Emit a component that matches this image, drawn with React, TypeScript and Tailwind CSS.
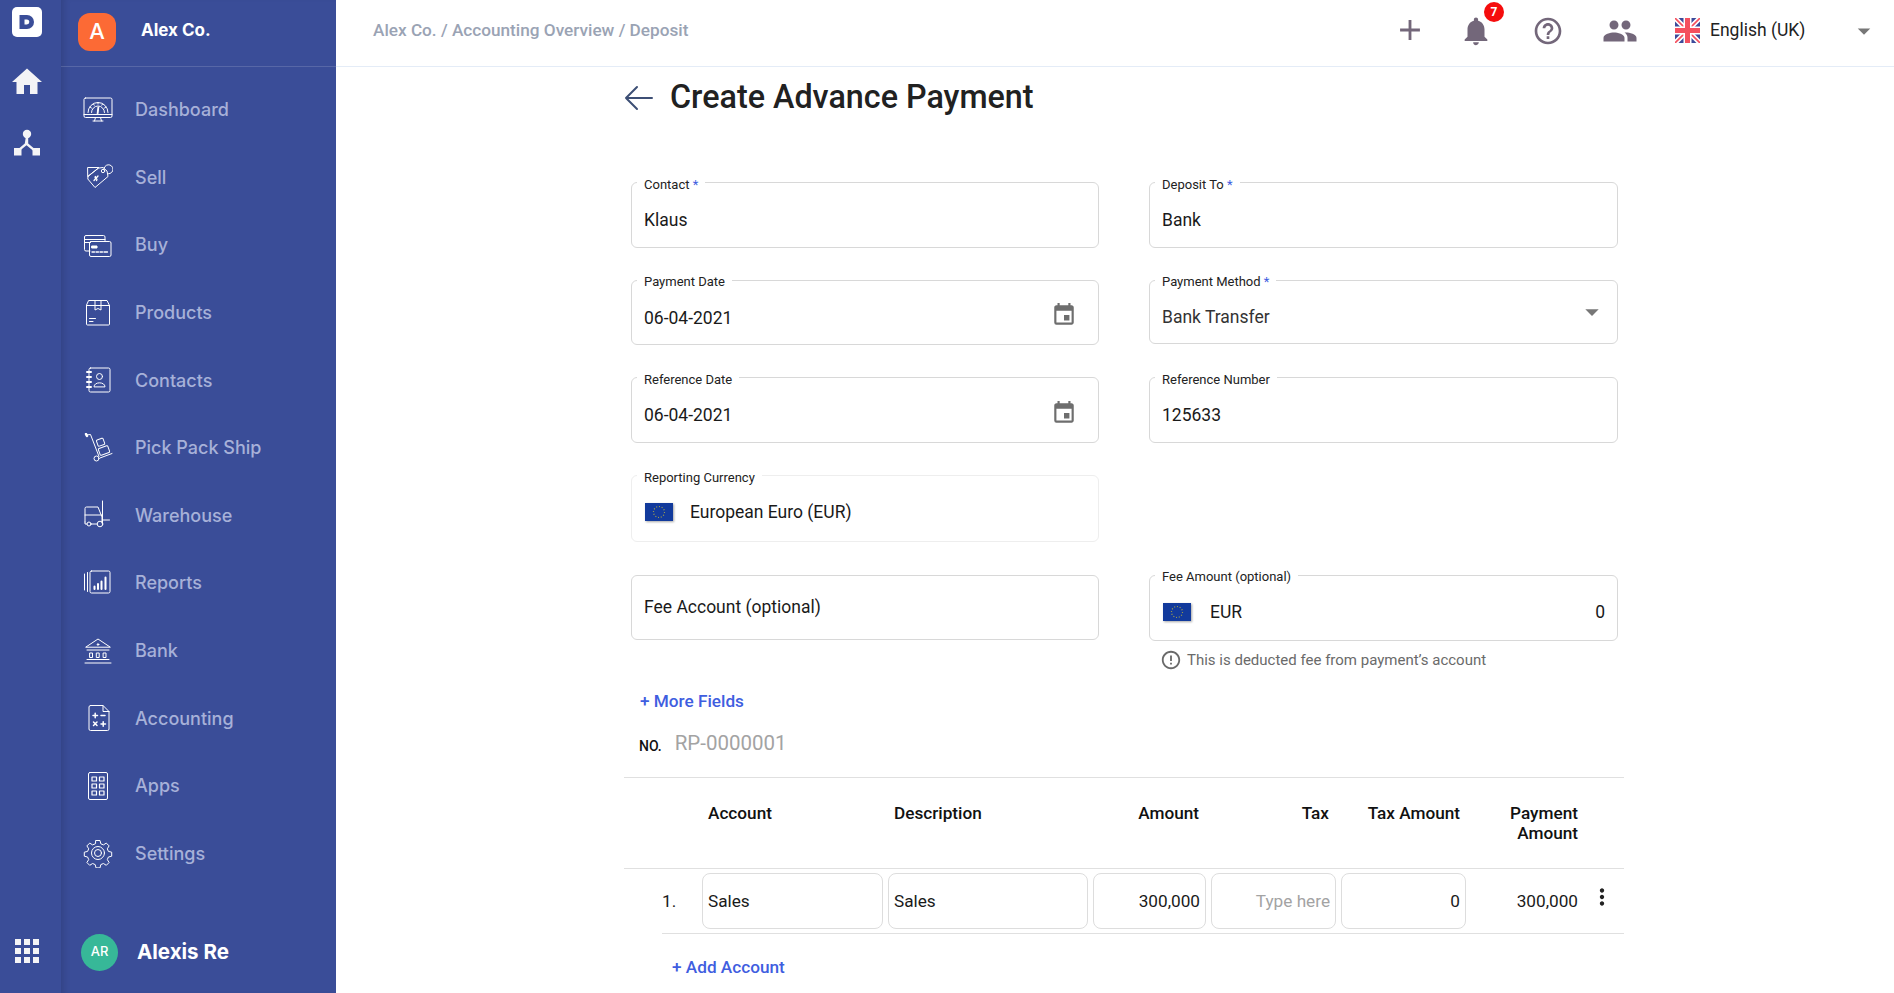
import React from "react";
import { MdNotifications, MdHelpOutline, MdPeople, MdAdd, MdEvent, MdArrowDropDown, MdErrorOutline, MdMoreVert, MdHome } from "react-icons/md";

const S = (p: { children: React.ReactNode }) => (
  <svg width="30" height="30" viewBox="0 0 30 30" fill="none" stroke="#fff" strokeWidth="1" strokeLinejoin="round" strokeLinecap="round">{p.children}</svg>
);

const icons: Record<string, React.ReactNode> = {
  Dashboard: <S><rect x="1" y="3" width="28" height="19.5" rx="1.5" /><path d="M1 19.5h28M10 26h10M12.5 22.5l-1 3.5M17.5 22.5l1 3.5" /><path d="M5 17.5a10 10 0 0 1 20 0" /><path d="M8.5 17.5a6.5 6.5 0 0 1 13 0M7 12l1.5 1M23 12l-1.5 1M15 7.5v1.5M10.5 9l.7 1.2M19.5 9l-.7 1.2" /><path d="M15 18.5l.8-6.5-.8 0-.8 6.5z" fill="#fff" /></S>,
  Sell: <S><path d="M5 5.500h11l-11 9z" /><path d="M5 14.500l-.2 2.500 7.200 8.500 13-11-1-5.500-4-3.500-4 .5z" /><circle cx="20" cy="9" r="1.700" /><path d="M21 7.800a4.500 4.500 0 1 1 4.500 4" /><path d="M15 14l-4 4.500M12.500 14.500c-2 1.200 3 2.500 1 4" strokeWidth="1.300" /></S>,
  Buy: <S><path d="M7 21H3a1.5 1.5 0 0 1-1.5-1.5V7A1.5 1.5 0 0 1 3 5.500h17.500A1.500 1.500 0 0 1 22 7v3.500" /><path d="M1.500 9.500H22M1.500 12.500h6" /><rect x="6.500" y="11.500" width="21.500" height="15" rx="1.500" /><path d="M9 16h5v2H9z" fill="#fff" /><path d="M9 22h2.500M13 22h2.500M17 22h2.500M21 22h3.500" strokeWidth="1.300" /></S>,
  Products: <S><path d="M6 2.500h18l2.500 5v18.500a1 1 0 0 1-1 1h-21a1 1 0 0 1-1-1V7.500z" /><path d="M3.500 7.500h23M12 2.500v9.500l3-1.500 3 1.500V2.500" /><path d="M6.500 20.500h6M6.500 23.500h3.500" /></S>,
  Contacts: <S><rect x="6" y="3" width="21" height="24" rx="1.500" /><circle cx="16.500" cy="11.500" r="3" /><path d="M11 21.500c0-5 11-5 11 0z" /><path d="M4 7h4M4 12h4M4 17h4M4 22h4" strokeWidth="2" /></S>,
  "Pick Pack Ship": <S><path d="M3 2l4.500-.5 8.500 22" /><path d="M3 1l1 2" strokeWidth="2.500" /><rect x="14" y="6" width="7" height="6.500" rx="1" transform="rotate(-20 17.500 9)" /><rect x="16" y="14" width="10" height="7" rx="1" transform="rotate(-20 21 17.500)" /><path d="M17 25l12-4.500" /><circle cx="13.500" cy="25.500" r="2.500" /></S>,
  Warehouse: <S><path d="M2 22V8.500A1.500 1.500 0 0 1 3.500 7h11.500l4 10v6" /><path d="M2 15h16.500M19.500 1v22M19.500 20h7" /><circle cx="6" cy="24" r="2" /><circle cx="17" cy="24" r="2.800" /><path d="M2 22v2h2M8 24h6" /></S>,
  Reports: <S><rect x="7" y="3" width="20" height="22" rx="1.500" /><path d="M1.500 6v16M4.500 4.500v19" /><path d="M11.500 21v-2.500M15 21v-5M18.500 21v-7.500M22.500 21V9.500" strokeWidth="2" /></S>,
  Bank: <S><path d="M3 11L15 3l12 8z" /><path d="M4 14h22M4 23.500h22M2 27h26" /><rect x="7" y="17" width="2.500" height="4.500" /><rect x="13.700" y="17" width="2.500" height="4.500" /><rect x="20.500" y="17" width="2.500" height="4.500" /><circle cx="15" cy="8.500" r=".8" fill="#fff" /></S>,
  Accounting: <S><path d="M7.500 2.500H20l6 6V26a1.500 1.500 0 0 1-1.500 1.500h-17A1.500 1.500 0 0 1 6 26V4a1.500 1.500 0 0 1 1.500-1.500z" /><path d="M20 2.500v6h6" /><g strokeWidth="1.500"><path d="M10 12.500h4.500M12.200 10.200v4.500M18 12.500h4M10.500 19l3.500 3.500M14 19l-3.500 3.500M18 21h4.500M20.200 18.800v4.500" /></g></S>,
  Apps: <S><rect x="5.500" y="1.500" width="19" height="27" rx="1.500" /><g strokeWidth="1.200"><rect x="9" y="6" width="4.500" height="4" /><rect x="16.500" y="6" width="4.500" height="4" /><rect x="9" y="13" width="4.500" height="4" /><rect x="16.500" y="13" width="4.500" height="4" /><rect x="9" y="20" width="4.500" height="4" /><rect x="16.500" y="20" width="4.500" height="4" /></g></S>,
  Settings: <S><path d="M13 2.500h4l.8 3.300 2.600 1.100 2.900-1.800 2.800 2.800-1.800 2.900 1.100 2.600 3.300.8v4l-3.300.8-1.100 2.600 1.800 2.900-2.800 2.800-2.900-1.800-2.600 1.100-.8 3.300h-4l-.8-3.300-2.600-1.100-2.900 1.800-2.800-2.800 1.800-2.900-1.100-2.600-3.300-.8v-4l3.300-.8 1.100-2.600-1.800-2.900 2.800-2.800 2.900 1.800 2.600-1.100z" /><circle cx="15" cy="15" r="6.500" /><circle cx="15" cy="15" r="3.500" /></S>,
};

const nav = ["Dashboard", "Sell", "Buy", "Products", "Contacts", "Pick Pack Ship", "Warehouse", "Reports", "Bank", "Accounting", "Apps", "Settings"];

const EuFlag = () => (
  <svg width="29" height="20" viewBox="0 0 29 20" className="shrink-0 drop-shadow-[1px_1px_1px_rgba(0,0,0,0.35)]">
    <rect width="28" height="18" fill="#123a9c" />
    <circle cx="14" cy="9" r="5.500" fill="none" stroke="#a5a24a" strokeWidth="1.200" strokeDasharray="1 1.800" />
  </svg>
);

const UkFlag = () => (
  <svg width="25" height="25" viewBox="0 0 25 25" className="shrink-0">
    <rect width="25" height="25" fill="#3c4a9a" />
    <path d="M0 0l25 25M25 0L0 25" stroke="#fff" strokeWidth="5" />
    <path d="M0 0l25 25M25 0L0 25" stroke="#f4505f" strokeWidth="1.600" />
    <path d="M12.500 0v25M0 12.500h25" stroke="#fff" strokeWidth="8" />
    <path d="M12.500 0v25M0 12.500h25" stroke="#f4505f" strokeWidth="5" />
  </svg>
);

function Field({ label, req, h, faint, high, children }: { label?: string; req?: boolean; h: string; faint?: boolean; high?: boolean; children: React.ReactNode }) {
  return (
    <div className={`relative flex items-center rounded-[6px] border px-3 text-[17.5px] text-[#1a1a1a] ${h} ${faint ? "border-[#eeeeee]" : "border-[#d8d8d8]"}`}>
      {label && (
        <span className={`absolute left-[5px] bg-white px-[7px] text-[13px] leading-4 text-[#222] ${high ? "top-[-7px]" : "top-[-6px]"}`}>
          {label}
          {req && <span className="text-[#3f5ee0]"> *</span>}
        </span>
      )}
      {children}
    </div>
  );
}

const rowCols = "grid grid-cols-[73px_181px_200px_113px_125px_125px_107px_41px] gap-x-[5px]";
const bodyCols = "grid grid-cols-[35px_181px_200px_113px_125px_125px_107px_41px] gap-x-[5px]";
const cell = "flex h-[56px] items-center rounded-[8px] border border-[#dddddd] px-[5px] pt-[1px] text-[17.2px] text-[#1a1a1a]";

export default function App() {
  return (
    <div className="flex h-[993px] w-full overflow-hidden bg-white" style={{ fontFamily: "Roboto, sans-serif" }}>
      {/* rail */}
      <aside className="flex w-[61px] shrink-0 flex-col items-center bg-[#3a4d98] pt-[7px] pr-[7px] pb-[30px]">
        <div className="flex h-[30px] w-[30px] items-center justify-center rounded-[5px] bg-white">
          <svg width="18" height="18" viewBox="0 0 18 18"><path d="M1.500 2h7.500a7 7 0 0 1 0 14H1.500z" fill="#3a4d98" /><path d="M6.500 6.500h2.300a2.500 2.500 0 0 1 0 5H6.500z" fill="#fff" /></svg>
        </div>
        <MdHome size={36} color="#f4f4f6" className="mt-[27px]" />
        <svg width="28" height="28" viewBox="0 0 28 28" className="mt-[29px]" fill="#f4f4f6">
          <circle cx="14" cy="5" r="4.200" />
          <path d="M12.800 8h2.400v6.500l6.500 5.500-1.500 1.800-6.700-5.500-6.700 5.500-1.500-1.800 6.500-5.500z" />
          <rect x="1" y="19" width="7.500" height="7.500" />
          <rect x="19.500" y="19" width="7.500" height="7.500" />
        </svg>
        <div className="mt-auto grid grid-cols-3 gap-[3px]">
          {Array.from({ length: 9 }).map((_, i) => (
            <span key={i} className="h-[6px] w-[6px] bg-[#f4f4f6]" />
          ))}
        </div>
      </aside>

      {/* sidebar */}
      <aside className="flex w-[275px] shrink-0 flex-col bg-[#3a4d98] shadow-[inset_7px_0_6px_-4px_rgba(0,0,0,0.12)]" style={{ fontFamily: "Inter, sans-serif" }}>
        <div className="flex h-[67px] shrink-0 items-center border-b border-white/15 pb-[6px] pl-[17px]">
          <div className="mt-[3px] flex h-[38px] w-[38px] items-center justify-center rounded-[12px] bg-[#fc6a35] text-[22px] font-medium text-white">A</div>
          <span className="ml-[25px] mt-[1px] text-[17px] font-bold text-white">Alex Co.</span>
        </div>
        <nav className="flex flex-col pt-[9px]">
          {nav.map((n) => (
            <div key={n} className="flex h-[67.6px] items-center pl-[22px]">
              <span className="flex h-[30px] w-[30px] items-center justify-center">{icons[n]}</span>
              <span className="ml-[22px] text-[18px] font-medium text-[#a7b1d8]">{n}</span>
            </div>
          ))}
        </nav>
        <div className="mt-auto flex h-[82px] items-center pl-[20px]">
          <div className="flex h-[37px] w-[37px] items-center justify-center rounded-full bg-[#37b898] text-[13px] font-medium text-white">AR</div>
          <span className="ml-[19px] text-[20.5px] font-bold text-white">Alexis Re</span>
        </div>
      </aside>

      {/* main */}
      <div className="flex min-w-0 flex-1 flex-col">
        <header className="flex h-[67px] shrink-0 items-center border-b border-[#e4ecf7] pb-[5px] pl-[37px]">
          <span className="text-[17.2px] font-medium text-[#9aa3b4]">Alex Co. / Accounting Overview / Deposit</span>
          <div className="ml-auto flex items-center text-[#73677a]">
            <MdAdd size={34} className="mb-[2px] mr-[32px] ml-[1px]" />
            <div className="relative mr-[39px]">
              <MdNotifications size={34} />
              <span className="absolute left-[25px] top-[-12px] flex h-[20px] w-[20px] items-center justify-center rounded-full bg-[#f50d0d] text-[12px] font-bold text-white">7</span>
            </div>
            <MdHelpOutline size={32} className="mr-[38px]" />
            <MdPeople size={36} className="mr-[37px]" />
            <span className="mb-[1px]"><UkFlag /></span>
            <span className="mb-[1px] ml-[10px] w-[139px] text-[17.5px] text-[#222]">English (UK)</span>
            <MdArrowDropDown size={30} className="mr-[15px] text-[#777]" />
          </div>
        </header>

        <main className="w-[1000px] ml-[288px]">
          <div className="flex h-[61px] items-center">
            <svg width="30" height="26" viewBox="0 0 30 26" fill="none" stroke="#3d4f75" strokeWidth="2" strokeLinecap="round" strokeLinejoin="round"><path d="M28 13H2M13 2L2 13l11 11" /></svg>
            <h1 className="ml-[16px] text-[32.3px] font-medium text-[#212121]">Create Advance Payment</h1>
          </div>

          <div className="ml-[7px] mt-[54px] grid grid-cols-[468px_469px] grid-rows-[98px_97px_98px_100px_102px] gap-x-[50px]">
            <Field label="Contact" req h="h-[66px]"><span className="pt-[11px]">Klaus</span></Field>
            <Field label="Deposit To" req h="h-[66px]"><span className="pt-[11px]">Bank</span></Field>

            <Field label="Payment Date" high h="h-[65px]">
              <span className="pt-[12px]">06-04-2021</span>
              <MdEvent size={26} className="ml-auto mr-[9px] mt-[5px] text-[#6e6e6e]" />
            </Field>
            <Field label="Payment Method" high req h="h-[64px]">
              <span className="pt-[11px] text-[#333]">Bank Transfer</span>
              <MdArrowDropDown size={32} className="ml-auto mr-[-3px] text-[#777]" />
            </Field>

            <Field label="Reference Date" h="h-[66px]">
              <span className="pt-[11px]">06-04-2021</span>
              <MdEvent size={26} className="ml-auto mr-[9px] mt-[5px] text-[#6e6e6e]" />
            </Field>
            <Field label="Reference Number" h="h-[66px]"><span className="pt-[11px]">125633</span></Field>

            <Field label="Reporting Currency" faint h="h-[67px]">
              <span className="mt-[8px] flex items-center pl-px">
                <EuFlag />
                <span className="ml-[16px]">European Euro (EUR)</span>
              </span>
            </Field>
            <div />

            <Field h="h-[65px]"><span>Fee Account (optional)</span></Field>
            <div>
              <Field label="Fee Amount (optional)" high h="h-[66px]">
                <span className="mt-[9px] flex items-center pl-px">
                  <EuFlag />
                  <span className="ml-[18px]">EUR</span>
                </span>
                <span className="ml-auto mt-[9px]">0</span>
              </Field>
              <div className="mt-[8px] ml-[11px] flex items-center text-[15px] text-[#6a6a6a]">
                <MdErrorOutline size={22} className="mr-[5px]" />
                This is deducted fee from payment’s account
              </div>
            </div>
          </div>

          <div className="flex h-12 items-center pt-[1px] pl-[16px] text-[17.2px] font-medium text-[#3f5ee0]">+ More Fields</div>
          <div className="flex h-10 items-center pl-[15px]">
            <span className="mt-[3px] text-[14px] font-medium text-[#111]">NO.</span>
            <span className="mb-[5px] ml-[13px] text-[20.5px] leading-7 text-[#a3a3a3]">RP-0000001</span>
          </div>

          <div className={`mt-[12px] border-t border-[#e0e0e0] pt-[25px] pb-[25px] text-[17.2px] font-medium leading-5 text-[#111] ${rowCols}`}>
            <span />
            <span className="pl-[6px]">Account</span>
            <span className="pl-[6px]">Description</span>
            <span className="pr-[7px] text-right">Amount</span>
            <span className="pr-[7px] text-right">Tax</span>
            <span className="pr-[6px] text-right">Tax Amount</span>
            <span className="text-right">Payment<br />Amount</span>
            <span />
          </div>
          <div className="border-t border-[#e0e0e0]">
            <div className={`ml-[38px] border-b border-[#e0e0e0] pt-[4px] pb-[4px] ${bodyCols}`}>
              <span className="flex items-center pt-[1px] text-[17.2px] text-[#1a1a1a]">1.</span>
              <div className={cell}>Sales</div>
              <div className={cell}>Sales</div>
              <div className={`${cell} justify-end`}>300,000</div>
              <div className={`${cell} justify-end text-[#a3a3a3]`}>Type here</div>
              <div className={`${cell} justify-end`}>0</div>
              <span className="flex items-center justify-end pt-[1px] text-[17.2px] text-[#1a1a1a]">300,000</span>
              <span className="flex items-center pb-[8px] pl-[6px] text-[#222]"><MdMoreVert size={26} /></span>
            </div>
          </div>
          <div className="ml-[48px] mt-[21px] text-[17.2px] font-medium text-[#3f5ee0]">+ Add Account</div>
        </main>
      </div>
    </div>
  );
}
